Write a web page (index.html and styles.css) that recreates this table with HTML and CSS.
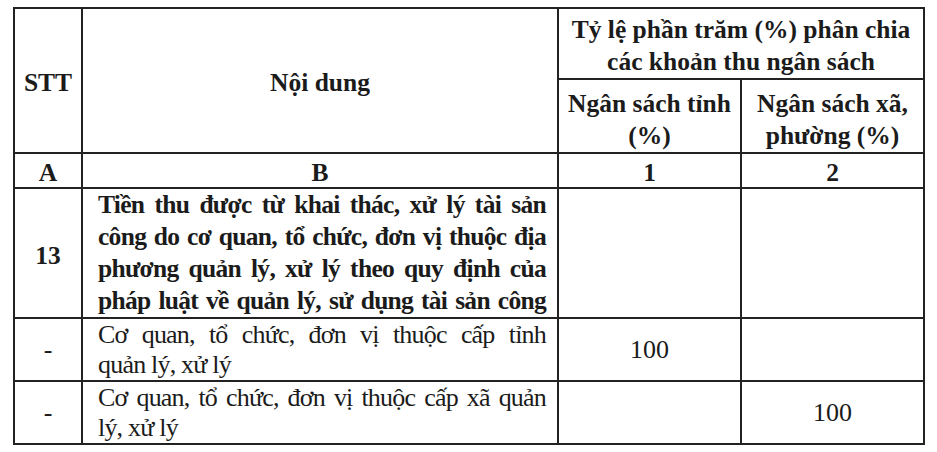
FILE: index.html
```html
<!DOCTYPE html>
<html lang="vi">
<head>
<meta charset="utf-8">
<link rel="stylesheet" href="styles.css">
</head>
<body>
<table class="tbl">
  <colgroup>
    <col class="c-stt">
    <col class="c-nd">
    <col class="c-p">
    <col class="c-p">
  </colgroup>
  <tr>
    <th rowspan="2" class="tall">STT</th>
    <th rowspan="2" class="tall">Nội dung</th>
    <th colspan="2"><div class="hb hb1"><span>Tỷ lệ phần trăm (%) phân chia</span><span>các khoản thu ngân sách</span></div></th>
  </tr>
  <tr>
    <th><div class="hb hb2"><span>Ngân sách tỉnh</span><span>(%)</span></div></th>
    <th><div class="hb hb2"><span>Ngân sách xã,</span><span>phường (%)</span></div></th>
  </tr>
  <tr class="r-idx">
    <th>A</th>
    <th>B</th>
    <th>1</th>
    <th>2</th>
  </tr>
  <tr class="r-main">
    <td class="b ctr num">13</td>
    <td class="b txt">
      <span class="ln">Tiền thu được từ khai thác, xử lý tài sản</span>
      <span class="ln">công do cơ quan, tổ chức, đơn vị thuộc địa</span>
      <span class="ln">phương quản lý, xử lý theo quy định của</span>
      <span class="ln">pháp luật về quản lý, sử dụng tài sản công</span>
    </td>
    <td></td>
    <td></td>
  </tr>
  <tr class="r-sub">
    <td class="ctr">-</td>
    <td class="txt">
      <span class="ln">Cơ quan, tổ chức, đơn vị thuộc cấp tỉnh</span>
      <span class="ln end">quản lý, xử lý</span>
    </td>
    <td class="ctr">100</td>
    <td></td>
  </tr>
  <tr class="r-sub">
    <td class="ctr">-</td>
    <td class="txt">
      <span class="ln">Cơ quan, tổ chức, đơn vị thuộc cấp xã quản</span>
      <span class="ln end">lý, xử lý</span>
    </td>
    <td></td>
    <td class="ctr">100</td>
  </tr>
</table>
</body>
</html>
```

FILE: styles.css
```css
html, body {
  margin: 0;
  padding: 0;
  background: #ffffff;
}
body {
  padding: 7px 0 0 13px;
  font-family: "Liberation Serif", "Times New Roman", serif;
  color: #1b1b1b;
}
.tbl {
  border-collapse: collapse;
  table-layout: fixed;
  width: 911px;
  font-size: 26px;
}
.c-stt { width: 68px; }
.c-nd { width: 476px; }
.c-p { width: 183px; }
.tbl th, .tbl td {
  border: 2px solid #222222;
  padding: 0;
  vertical-align: middle;
  overflow: hidden;
}
.tbl th {
  font-weight: bold;
  font-size: 25.5px;
  text-align: center;
  line-height: 32px;
}
.tbl th.tall {
  padding-top: 4px;
}
.hb {
  display: flex;
  flex-direction: column;
  align-items: center;
  justify-content: flex-end;
  overflow: visible;
}
.hb span {
  display: block;
  height: 32px;
  line-height: 32px;
  white-space: nowrap;
}
.hb1 {
  height: 69px;
}
.hb2 {
  height: 72px;
}
.r-idx { height: 35px; }
.r-idx th {
  line-height: 28px;
  padding-top: 4px;
}
.r-main { height: 129px; }
.r-sub { height: 63px; }
.tbl td {
  line-height: 30px;
}
.tbl td.b {
  font-weight: bold;
  font-size: 25.5px;
  line-height: 32px;
}
.tbl td.num {
  padding-top: 5px;
}
.ctr { text-align: center; }
.txt {
  padding: 0 11px 0 15px !important;
  letter-spacing: -0.8px;
}
.b.txt {
  letter-spacing: -0.7px;
}
.ln {
  display: block;
  white-space: nowrap;
  text-align: justify;
  text-align-last: justify;
}
.ln.end {
  text-align-last: left;
}
```
